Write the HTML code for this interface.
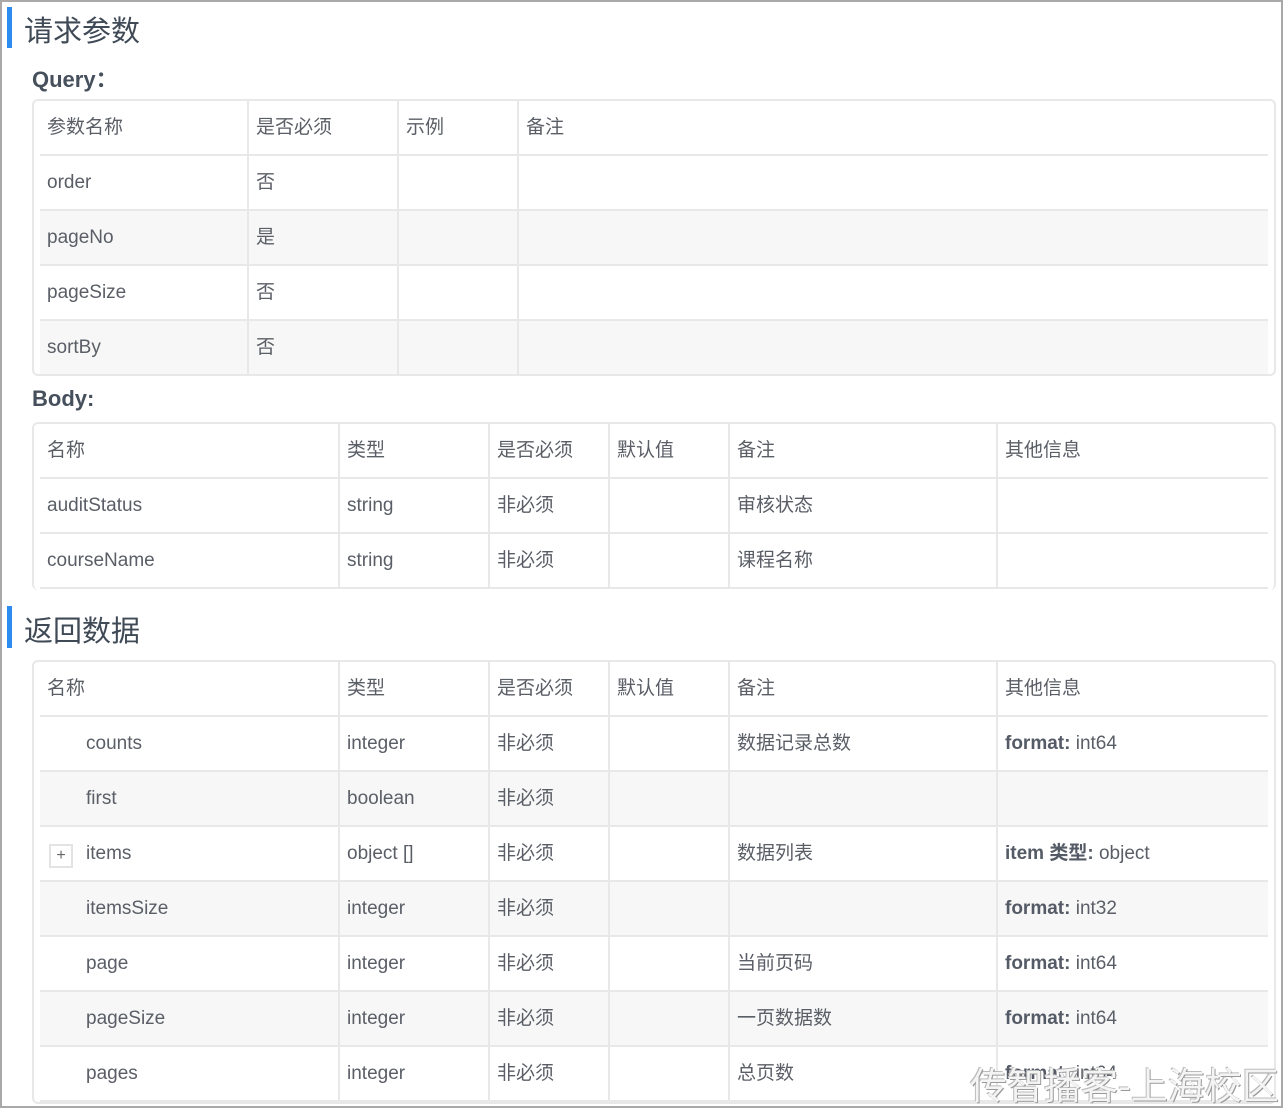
<!DOCTYPE html>
<html><head><meta charset="utf-8"><style>
*{box-sizing:border-box;margin:0;padding:0}
html,body{width:1283px;height:1108px;background:#fff;overflow:hidden}
body{position:relative;font-family:"Liberation Sans","Noto Sans CJK SC",sans-serif;color:#5a5e66;font-size:19px}
.frame{position:absolute;left:0;top:0;width:1283px;height:1108px;border:2px solid #aba8aa;pointer-events:none}
.bar{position:absolute;left:7px;width:5px;background:#2d8cf0}
.h1{position:absolute;left:24px;font-size:29px;color:#3f4a56}
.h2{position:absolute;left:32px;font-size:22px;font-weight:bold;color:#46505c}
.tbl{position:absolute;left:32px;width:1244px;border:2px solid #e8e8e8;border-radius:6px;padding:0 6px}
.row{display:flex;height:55px;border-bottom:2px solid #e8e8e8}
.row.s{background:#f7f7f7}
.c{border-right:2px solid #e8e8e8;padding-left:7px;line-height:53px;white-space:nowrap;overflow:hidden;position:relative}
.c:last-child{border-right:none}
.n{padding-left:46px}
.plus{position:absolute;left:9px;top:17px;width:24px;height:24px;border:2px solid #e3e3e3;line-height:20px;text-align:center;font-size:16px;color:#666;background:#fff}
b{color:#555b66}
.wm{position:absolute;left:970px;top:1056px;font-size:37px;color:#f4f4f4;text-shadow:1px 1px 0 #9a9a9a,-1px -1px 0 #bbb;font-family:"Noto Sans CJK SC",sans-serif}
</style></head><body>
<div class="bar" style="top:7px;height:41px"></div>
<div class="h1" style="top:8px">请求参数</div>
<div class="h2" style="top:62px">Query：</div>
<div class="tbl" style="top:99px;height:277px">
<div class="row"><div class="c" style="width:209px">参数名称</div><div class="c" style="width:150px">是否必须</div><div class="c" style="width:120px">示例</div><div class="c" style="flex:1">备注</div></div>
<div class="row"><div class="c" style="width:209px">order</div><div class="c" style="width:150px">否</div><div class="c" style="width:120px"></div><div class="c" style="flex:1"></div></div>
<div class="row s"><div class="c" style="width:209px">pageNo</div><div class="c" style="width:150px">是</div><div class="c" style="width:120px"></div><div class="c" style="flex:1"></div></div>
<div class="row"><div class="c" style="width:209px">pageSize</div><div class="c" style="width:150px">否</div><div class="c" style="width:120px"></div><div class="c" style="flex:1"></div></div>
<div class="row s"><div class="c" style="width:209px">sortBy</div><div class="c" style="width:150px">否</div><div class="c" style="width:120px"></div><div class="c" style="flex:1"></div></div>
</div>
<div class="h2" style="top:386px">Body:</div>
<div class="tbl" style="top:422px;height:168px;border-bottom:none">
<div class="row"><div class="c" style="width:300px">名称</div><div class="c" style="width:150px">类型</div><div class="c" style="width:120px">是否必须</div><div class="c" style="width:120px">默认值</div><div class="c" style="width:268px">备注</div><div class="c" style="flex:1">其他信息</div></div>
<div class="row"><div class="c" style="width:300px">auditStatus</div><div class="c" style="width:150px">string</div><div class="c" style="width:120px">非必须</div><div class="c" style="width:120px"></div><div class="c" style="width:268px">审核状态</div><div class="c" style="flex:1"></div></div>
<div class="row"><div class="c" style="width:300px">courseName</div><div class="c" style="width:150px">string</div><div class="c" style="width:120px">非必须</div><div class="c" style="width:120px"></div><div class="c" style="width:268px">课程名称</div><div class="c" style="flex:1"></div></div>
</div>
<div class="bar" style="top:606px;height:42px"></div>
<div class="h1" style="top:608px">返回数据</div>
<div class="tbl" style="top:660px;height:444px">
<div class="row"><div class="c" style="width:300px">名称</div><div class="c" style="width:150px">类型</div><div class="c" style="width:120px">是否必须</div><div class="c" style="width:120px">默认值</div><div class="c" style="width:268px">备注</div><div class="c" style="flex:1">其他信息</div></div>
<div class="row"><div class="c n" style="width:300px">counts</div><div class="c" style="width:150px">integer</div><div class="c" style="width:120px">非必须</div><div class="c" style="width:120px"></div><div class="c" style="width:268px">数据记录总数</div><div class="c" style="flex:1"><b>format:</b> int64</div></div>
<div class="row s"><div class="c n" style="width:300px">first</div><div class="c" style="width:150px">boolean</div><div class="c" style="width:120px">非必须</div><div class="c" style="width:120px"></div><div class="c" style="width:268px"></div><div class="c" style="flex:1"></div></div>
<div class="row"><div class="c n" style="width:300px"><span class="plus">+</span>items</div><div class="c" style="width:150px">object []</div><div class="c" style="width:120px">非必须</div><div class="c" style="width:120px"></div><div class="c" style="width:268px">数据列表</div><div class="c" style="flex:1"><b>item 类型:</b> object</div></div>
<div class="row s"><div class="c n" style="width:300px">itemsSize</div><div class="c" style="width:150px">integer</div><div class="c" style="width:120px">非必须</div><div class="c" style="width:120px"></div><div class="c" style="width:268px"></div><div class="c" style="flex:1"><b>format:</b> int32</div></div>
<div class="row"><div class="c n" style="width:300px">page</div><div class="c" style="width:150px">integer</div><div class="c" style="width:120px">非必须</div><div class="c" style="width:120px"></div><div class="c" style="width:268px">当前页码</div><div class="c" style="flex:1"><b>format:</b> int64</div></div>
<div class="row s"><div class="c n" style="width:300px">pageSize</div><div class="c" style="width:150px">integer</div><div class="c" style="width:120px">非必须</div><div class="c" style="width:120px"></div><div class="c" style="width:268px">一页数据数</div><div class="c" style="flex:1"><b>format:</b> int64</div></div>
<div class="row"><div class="c n" style="width:300px">pages</div><div class="c" style="width:150px">integer</div><div class="c" style="width:120px">非必须</div><div class="c" style="width:120px"></div><div class="c" style="width:268px">总页数</div><div class="c" style="flex:1"><b>format:</b> int64</div></div>
</div>
<div class="wm">传智播客-上海校区</div>
<div class="frame"></div>
</body></html>
